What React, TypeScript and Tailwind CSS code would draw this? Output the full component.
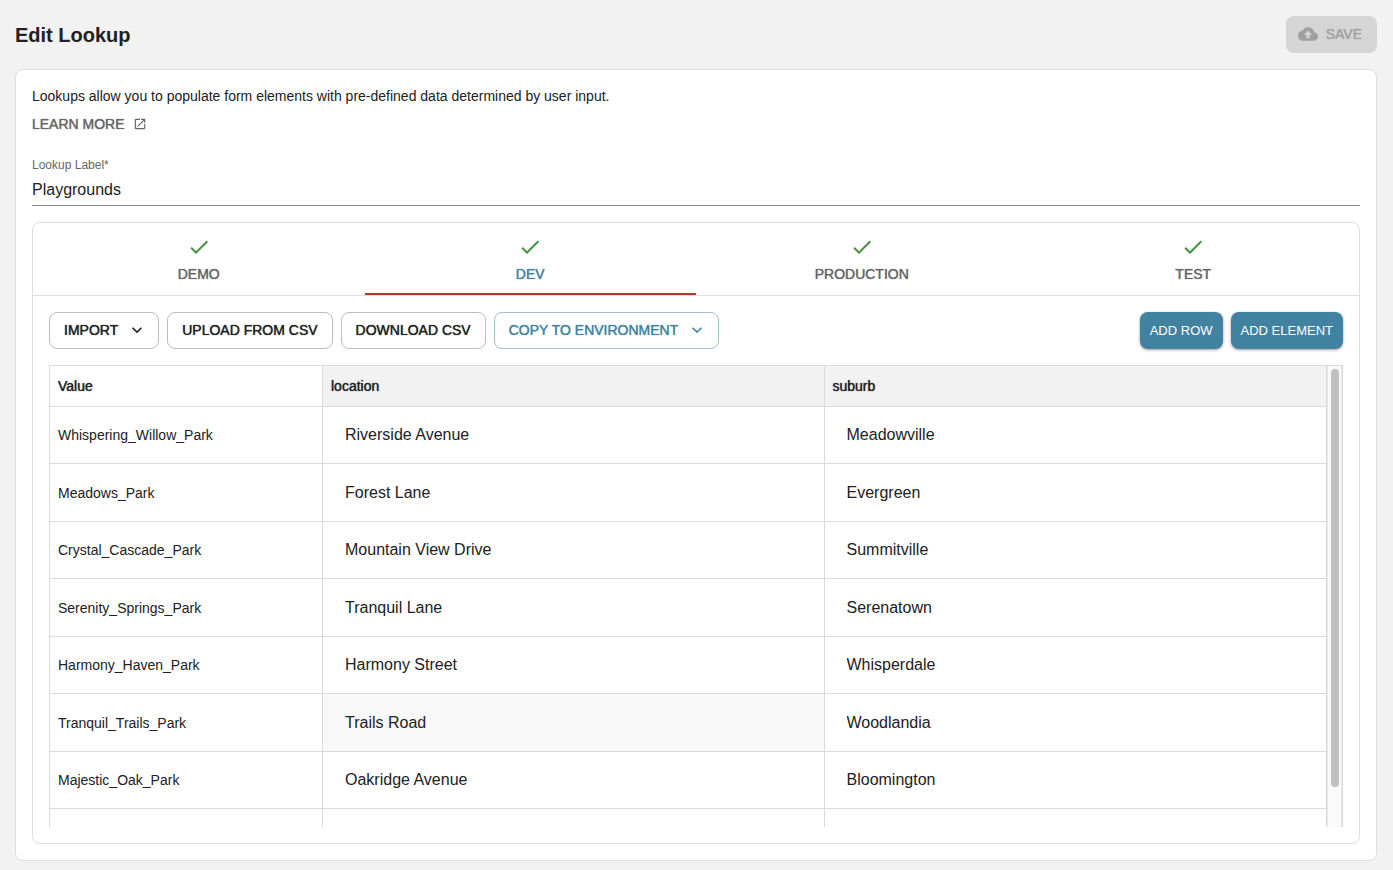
import { useState } from "react";
import { MdCheck, MdCloudUpload, MdExpandMore, MdOpenInNew } from "react-icons/md";
import clsx from "clsx";

interface LookupRow {
  value: string;
  location: string;
  suburb: string;
}

const environments = ["Demo", "Dev", "Production", "Test"];

const rows: LookupRow[] = [
  { value: "Whispering_Willow_Park", location: "Riverside Avenue", suburb: "Meadowville" },
  { value: "Meadows_Park", location: "Forest Lane", suburb: "Evergreen" },
  { value: "Crystal_Cascade_Park", location: "Mountain View Drive", suburb: "Summitville" },
  { value: "Serenity_Springs_Park", location: "Tranquil Lane", suburb: "Serenatown" },
  { value: "Harmony_Haven_Park", location: "Harmony Street", suburb: "Whisperdale" },
  { value: "Tranquil_Trails_Park", location: "Trails Road", suburb: "Woodlandia" },
  { value: "Majestic_Oak_Park", location: "Oakridge Avenue", suburb: "Bloomington" },
];

// thickens regular text to roughly a medium weight
const medium = "font-medium [text-shadow:0_0_1px_currentColor]";
const outlined = "flex h-[37px] items-center gap-[9px] rounded-lg border px-[14px] pb-px text-sm uppercase whitespace-nowrap";
const contained = "h-[37px] rounded-lg bg-[#4282a1] px-[10px] text-[13px] uppercase text-white shadow-[0_1px_3px_rgba(0,0,0,0.4)] whitespace-nowrap";

function CellInput({ label, value }: { label: string; value: string }) {
  return (
    <input
      aria-label={label}
      defaultValue={value}
      className="block h-[56px] w-full bg-transparent px-[22px] text-base text-[#212121] outline-none"
    />
  );
}

export default function App() {
  const [env, setEnv] = useState("Dev");
  const [label, setLabel] = useState("Playgrounds");

  return (
    <div className="flex min-h-screen flex-col bg-[#f2f2f2] pt-4 pr-4 pb-[9px] pl-[15px] font-['Liberation_Sans',Arial,sans-serif] text-[#212121]">
      <header className="mb-4 flex items-center justify-between">
        <h1 className="text-xl font-bold">Edit Lookup</h1>
        <button disabled className={clsx("flex h-[37px] items-center gap-2 rounded-lg bg-[#d5d5d5] px-3 pr-[15px] pb-px text-sm uppercase text-[#a0a0a0]", medium)}>
          <MdCloudUpload className="h-5 w-5" />
          Save
        </button>
      </header>

      <main className="flex flex-1 flex-col rounded-lg border border-[#dedede] bg-white p-4">
        <p className="text-sm leading-5">Lookups allow you to populate form elements with pre-defined data determined by user input.</p>
        <a href="#learn-more" className={clsx("mt-2 flex items-center gap-2 self-start text-sm leading-5 uppercase text-[#666]", medium)}>
          Learn more <MdOpenInNew className="h-[14px] w-[14px]" />
        </a>

        <label htmlFor="lookup-label" className="mt-[23px] text-xs leading-4 text-[#666]">Lookup Label*</label>
        <input
          id="lookup-label"
          value={label}
          onChange={e => setLabel(e.target.value)}
          className="h-[33px] border-b border-[#8c8c8c] pt-[2px] text-base outline-none"
        />

        <section className="mt-4 flex flex-1 flex-col rounded-lg border border-[#dedede]">
          <div role="tablist" className="flex border-b border-[#dedede]">
            {environments.map(name => (
              <button
                key={name}
                role="tab"
                aria-selected={env === name}
                onClick={() => setEnv(name)}
                className={clsx(
                  "flex h-[72px] flex-1 flex-col items-center border-b-2 pt-3 text-sm leading-5 uppercase",
                  medium,
                  env === name ? "border-[#ad3a2b] text-[#4282a1]" : "border-transparent text-[#666]"
                )}
              >
                <MdCheck className="mb-[5px] h-6 w-6 text-[#43903f]" />
                {name}
              </button>
            ))}
          </div>

          <div className="flex flex-1 flex-col gap-4 px-4 py-4">
            <div className="flex flex-wrap justify-between gap-2">
              <div className="flex flex-wrap gap-2">
                <button className={clsx(outlined, medium, "border-[#bdbdbd] pr-[11px]")}>
                  Import <MdExpandMore className="h-5 w-5" />
                </button>
                <button className={clsx(outlined, medium, "border-[#bdbdbd]")}>Upload from CSV</button>
                <button className={clsx(outlined, medium, "border-[#bdbdbd]")}>Download CSV</button>
                <button className={clsx(outlined, medium, "border-[#a0c0d0] pr-[11px] text-[#4282a1]")}>
                  Copy to environment <MdExpandMore className="h-5 w-5" />
                </button>
              </div>
              <div className="flex gap-2">
                <button className={contained}>Add row</button>
                <button className={contained}>Add element</button>
              </div>
            </div>

            <div className="flex h-[462px] border-t border-l border-[#dadada]">
              <div className="flex-1 overflow-y-auto [scrollbar-width:none]">
                <table className="w-full table-fixed border-separate border-spacing-0 text-left text-sm">
                  <colgroup>
                    <col className="w-[273px]" />
                    <col />
                    <col />
                  </colgroup>
                  <thead>
                    <tr className="h-[41px]">
                      <th className={clsx("border-r border-b border-[#dadada] px-2", medium)}>Value</th>
                      <th className={clsx("border-r border-b border-[#dadada] bg-[#f2f2f2] px-2", medium)}>location</th>
                      <th className={clsx("border-b border-[#dadada] bg-[#f2f2f2] px-2", medium)}>suburb</th>
                    </tr>
                  </thead>
                  <tbody>
                    {rows.map(row => (
                      <tr key={row.value} className="odd:h-[57px] even:h-[58px]">
                        <td className="border-r border-b border-[#dadada] px-2">{row.value}</td>
                        <td className={clsx("border-r border-b border-[#dadada]", row.location === "Trails Road" && "bg-[#f8f8f8]")}>
                          <CellInput label={`${row.value} location`} value={row.location} />
                        </td>
                        <td className="border-b border-[#dadada]">
                          <CellInput label={`${row.value} suburb`} value={row.suburb} />
                        </td>
                      </tr>
                    ))}
                    <tr className="h-[58px]">
                      <td className="border-r border-[#dadada]" />
                      <td className="border-r border-[#dadada]" />
                      <td />
                    </tr>
                  </tbody>
                </table>
              </div>
              <div aria-hidden="true" className="flex w-[17px] justify-center border-r border-l border-[#dadada]">
                <div className="flex flex-1 justify-center border-r border-l border-[#e8e8e8] bg-[#fafafa] pt-[3px]">
                  <div className="h-[418px] w-2 rounded-full bg-[#c0c0c0]" />
                </div>
              </div>
            </div>
          </div>
        </section>
      </main>
    </div>
  );
}
